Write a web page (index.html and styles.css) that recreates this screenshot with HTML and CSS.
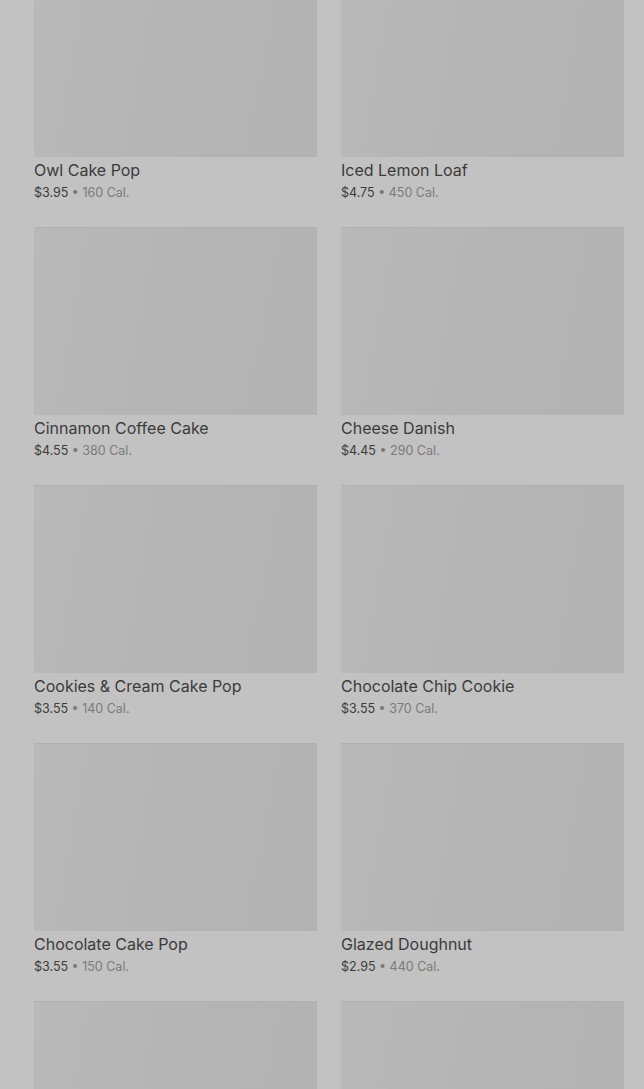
FILE: index.html
```html
<!DOCTYPE html>
<html lang="en">
<head>
    <meta charset="UTF-8">
    <meta name="viewport" content="width=device-width, initial-scale=1.0">
    <title>Bakery</title>
    <link rel="stylesheet" href="styles.css">
</head>
<body>
    <div class="menu-grid">
        <div class="product">
            <div class="product-image"></div>
            <div class="product-name">Owl Cake Pop</div>
            <div class="product-info"><span class="price">$3.95</span> • 160 Cal.</div>
        </div>
        <div class="product">
            <div class="product-image"></div>
            <div class="product-name">Iced Lemon Loaf</div>
            <div class="product-info"><span class="price">$4.75</span> • 450 Cal.</div>
        </div>
        <div class="product">
            <div class="product-image"></div>
            <div class="product-name">Cinnamon Coffee Cake</div>
            <div class="product-info"><span class="price">$4.55</span> • 380 Cal.</div>
        </div>
        <div class="product">
            <div class="product-image"></div>
            <div class="product-name">Cheese Danish</div>
            <div class="product-info"><span class="price">$4.45</span> • 290 Cal.</div>
        </div>
        <div class="product">
            <div class="product-image"></div>
            <div class="product-name">Cookies &amp; Cream Cake Pop</div>
            <div class="product-info"><span class="price">$3.55</span> • 140 Cal.</div>
        </div>
        <div class="product">
            <div class="product-image"></div>
            <div class="product-name">Chocolate Chip Cookie</div>
            <div class="product-info"><span class="price">$3.55</span> • 370 Cal.</div>
        </div>
        <div class="product">
            <div class="product-image"></div>
            <div class="product-name">Chocolate Cake Pop</div>
            <div class="product-info"><span class="price">$3.55</span> • 150 Cal.</div>
        </div>
        <div class="product">
            <div class="product-image"></div>
            <div class="product-name">Glazed Doughnut</div>
            <div class="product-info"><span class="price">$2.95</span> • 440 Cal.</div>
        </div>
        <div class="product">
            <div class="product-image"></div>
        </div>
        <div class="product">
            <div class="product-image"></div>
        </div>
    </div>
</body>
</html>
```

FILE: styles.css
```css
html, body {
    margin: 0;
    padding: 0;
    background-color: #c2c2c2;
    overflow: hidden;
}
body {
    font-family: Inter, Roboto, "Liberation Sans", sans-serif;
    height: 1089px;
}
.menu-grid {
    display: grid;
    grid-template-columns: 283px 283px;
    column-gap: 24px;
    row-gap: 24px;
    padding-left: 34px;
    margin-top: -31px;
}
.product-image {
    height: 188px;
    background: linear-gradient(100deg, #b9b9b9 0%, #b6b6b6 30%, #b4b4b4 60%, #b3b3b3 100%);
    box-shadow: inset 0 1px 0 #b0b0b0;
}
.product-name {
    margin-top: 1px;
    font-size: 16px;
    line-height: 24px;
    color: #3b3b3b;
}
.product-info {
    font-size: 12.5px;
    line-height: 21px;
    color: #7a7a7a;
}
.price {
    color: #3b3b3b;
}
```
